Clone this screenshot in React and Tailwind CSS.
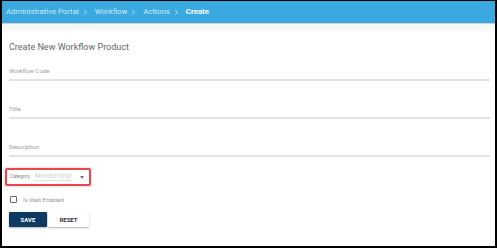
import { ChevronRight } from 'lucide-react'

const Field = ({ label }) => (
  <div className="pt-[25px] first:pt-0">
    <div className="text-[6px] text-[#9a9a9a] leading-[6px]">{label}</div>
    <div className="mt-[5px] h-[2px] bg-[#e3e3e3]" />
  </div>
)

export default function App() {
  const crumbs = ['Administrative Portal', 'Workflow', 'Actions']

  return (
    <div className="w-[497px] h-[248px] bg-white border-t border-l-2 border-r-2 border-b-2 border-black font-['Roboto',sans-serif] overflow-hidden flex flex-col">
      {/* Breadcrumb bar */}
      <div className="h-[22px] bg-[#3aa9e0] flex items-center pl-[4px] text-[7.8px] shrink-0">
        {crumbs.map((c) => (
          <div key={c} className="flex items-center">
            <span className="text-white/75">{c}</span>
            <ChevronRight className="w-[7px] h-[7px] ml-[3px] mr-[6px] text-white/80" strokeWidth={3} />
          </div>
        ))}
        <span className="text-white font-bold">Create</span>
      </div>
      <div className="h-[1px] bg-[#cfcfcf]" />
      <div className="h-[6px] bg-[#f7f7f7]" />

      <div className="pl-[7px] pr-[5px]">
        <h1 className="mt-[13px] text-[9px] text-[#666] leading-[9px]">Create New Workflow Product</h1>

        <div className="mt-[16px]">
          <Field label="Workflow Code" />
          <Field label="Title" />
          <Field label="Description" />
        </div>

        {/* Category select, highlighted */}
        <div className="mt-[11px] -ml-[4px] w-[86px] h-[18px] border-2 border-[#e5484d] rounded-[2px] shadow-[0_0_3px_rgba(229,72,77,0.4)] flex items-center pl-[3px]">
          <span className="text-[5px] text-[#888]">Category</span>
          <div className="ml-[5px] w-[37px] border-b border-[#e2e2e2] text-[6.5px] text-[#d0d0d0] leading-none pb-[1px]">Membership</div>
          <svg className="ml-[8px]" width="4" height="3" viewBox="0 0 4 3">
            <path d="M0 0 L4 0 L2 3 Z" fill="#777" />
          </svg>
        </div>

        <div className="mt-[9px] flex items-center">
          <div className="w-[7px] h-[7px] border border-[#666] rounded-[1px] ml-[1px]" />
          <span className="ml-[6px] text-[6px] text-[#999]">Is Web Enabled</span>
        </div>

        <div className="mt-[8px] flex">
          <button className="w-[38px] h-[15px] bg-[#0f3a63] text-white text-[6px] font-bold rounded-[1px] shadow-[0_1px_2px_rgba(0,0,0,0.3)]">
            SAVE
          </button>
          <button className="ml-[1px] w-[41px] h-[15px] bg-white text-[#333] text-[6px] font-bold shadow-[0_1px_2px_rgba(0,0,0,0.3)] rounded-[1px]">
            RESET
          </button>
        </div>
      </div>
    </div>
  )
}
